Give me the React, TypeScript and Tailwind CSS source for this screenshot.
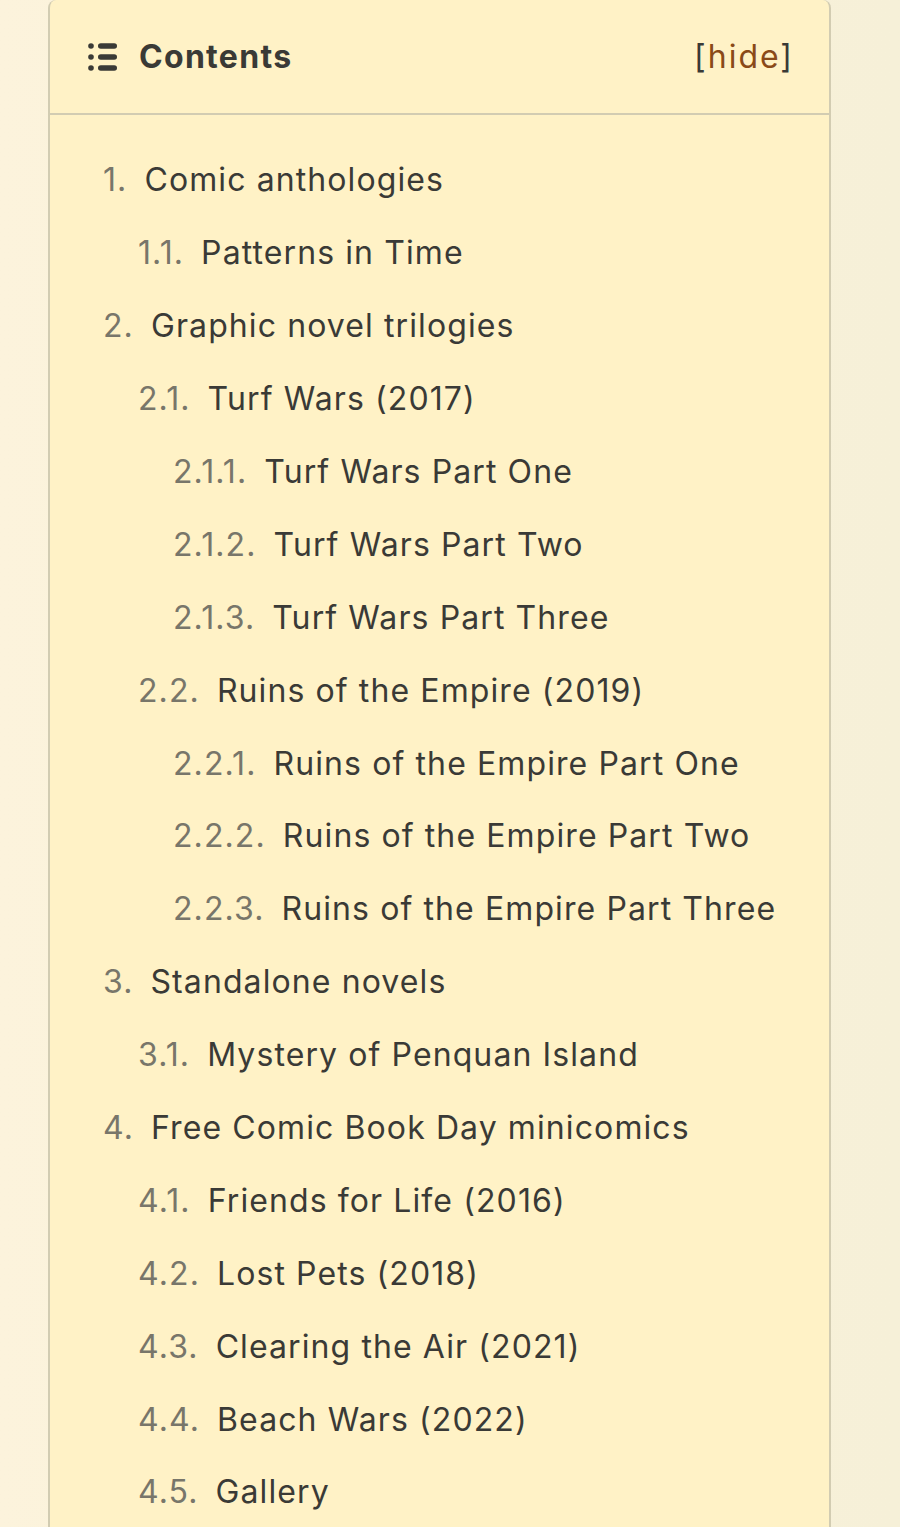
import React from 'react';

type Item = { num: string; title: string; level: number };

const items: Item[] = [
    { num: '1.', title: 'Comic anthologies', level: 0 },
    { num: '1.1.', title: 'Patterns in Time', level: 1 },
    { num: '2.', title: 'Graphic novel trilogies', level: 0 },
    { num: '2.1.', title: 'Turf Wars (2017)', level: 1 },
    { num: '2.1.1.', title: 'Turf Wars Part One', level: 2 },
    { num: '2.1.2.', title: 'Turf Wars Part Two', level: 2 },
    { num: '2.1.3.', title: 'Turf Wars Part Three', level: 2 },
    { num: '2.2.', title: 'Ruins of the Empire (2019)', level: 1 },
    { num: '2.2.1.', title: 'Ruins of the Empire Part One', level: 2 },
    { num: '2.2.2.', title: 'Ruins of the Empire Part Two', level: 2 },
    { num: '2.2.3.', title: 'Ruins of the Empire Part Three', level: 2 },
    { num: '3.', title: 'Standalone novels', level: 0 },
    { num: '3.1.', title: 'Mystery of Penquan Island', level: 1 },
    { num: '4.', title: 'Free Comic Book Day minicomics', level: 0 },
    { num: '4.1.', title: 'Friends for Life (2016)', level: 1 },
    { num: '4.2.', title: 'Lost Pets (2018)', level: 1 },
    { num: '4.3.', title: 'Clearing the Air (2021)', level: 1 },
    { num: '4.4.', title: 'Beach Wars (2022)', level: 1 },
    { num: '4.5.', title: 'Gallery', level: 1 },
];

const indent = ['pl-[53px]', 'pl-[88px]', 'pl-[123px]'];

const ListIcon = () => (
    <svg className="w-[30px] h-[30px]" viewBox="0 0 30 30" fill="#3a3a36">
        <circle cx="3" cy="4" r="2.8" />
        <circle cx="3" cy="15" r="2.8" />
        <circle cx="3" cy="26" r="2.8" />
        <rect x="10" y="1.2" width="19" height="5.6" rx="2.8" />
        <rect x="10" y="12.2" width="19" height="5.6" rx="2.8" />
        <rect x="10" y="23.2" width="19" height="5.6" rx="2.8" />
    </svg>
);

const App: React.FC = () => {
    return (
        <div
            className="min-h-[1527px] w-[900px] overflow-hidden bg-gradient-to-r from-[#fcf3dc] via-[#f8f1da] to-[#f6f0d8] pl-[48px] pr-[69px]"
            style={{ fontFamily: 'Inter, "Noto Sans", sans-serif' }}
        >
            <div className="bg-[#fff2c6] border-2 border-t-0 border-[#d2ccb2] rounded-b-none rounded-t-[8px] min-h-[1527px]">
                <div className="h-[115px] flex items-center justify-between pl-[38px] pr-[35px] border-b-2 border-[#d2ccb2]">
                    <div className="flex items-center gap-[21px]">
                        <ListIcon />
                        <span className="text-[32px] font-bold text-[#3a3a36] tracking-[1.3px]">Contents</span>
                    </div>
                    <span className="text-[32px] text-[#3a3a36] tracking-[2px]">
                        [<span className="text-[#8a4a18]">hide</span>]
                    </span>
                </div>
                <ul className="pt-[29px]">
                    {items.map((it) => (
                        <li key={it.num} className={`h-[72.9px] flex items-center text-[32px] tracking-[1.1px] ${indent[it.level]}`}>
                            <span className="text-[#78766a] mr-[17px]">{it.num}</span>
                            <span className="text-[#3a3a36]">{it.title}</span>
                        </li>
                    ))}
                </ul>
            </div>
        </div>
    );
};

export default App;
